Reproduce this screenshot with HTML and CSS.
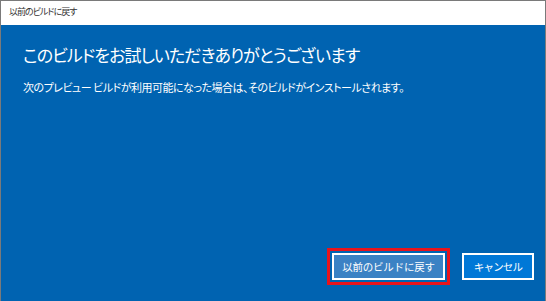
FILE: index.html
```html
<!DOCTYPE html>
<html lang="ja">
<head>
  <meta charset="UTF-8">
  <meta name="viewport" content="width=device-width, initial-scale=1.0">
  <title>以前のビルドに戻す</title>
  <link rel="stylesheet" href="styles.css">
</head>
<body>
  <div class="window">
    <div class="titlebar">以前のビルドに戻す</div>
    <div class="content">
      <h1 class="heading">このビルドをお試しいただきありがとうございます</h1>
      <p class="message">次のプレビュー ビルドが利用可能になった場合は、そのビルドがインストールされます。</p>
    </div>
    <div class="footer">
      <button type="button" class="btn btn-back">以前のビルドに戻す</button>
      <button type="button" class="btn btn-cancel">キャンセル</button>
    </div>
  </div>
</body>
</html>
```

FILE: styles.css
```css
html,
body {
  margin: 0;
  height: 100%;
}

body {
  font-family: "Noto Sans CJK JP", "Noto Sans", sans-serif;
  font-feature-settings: "palt";
}

.window {
  box-sizing: border-box;
  height: 100%;
  display: flex;
  flex-direction: column;
  border: 1px solid #7a7a7a;
  border-bottom: none;
  background-color: #0063b1;
}

.titlebar {
  height: 24px;
  line-height: 22px;
  padding-left: 8px;
  background-color: #ffffff;
  color: #333333;
  font-size: 9px;
  letter-spacing: -1px;
}

.content {
  flex: 1;
  padding: 16px 22px 0;
  color: #ffffff;
}

.heading {
  margin: 0;
  font-size: 17px;
  font-weight: normal;
  line-height: 28px;
  letter-spacing: -0.95px;
}

.message {
  margin: 9px 0 0;
  font-size: 11px;
  line-height: 18px;
  letter-spacing: -0.5px;
}

.footer {
  display: flex;
  justify-content: flex-end;
  gap: 17px;
  padding: 0 11px 21px 0;
}

.btn {
  box-sizing: border-box;
  height: 27px;
  border: 2px solid #ffffff;
  color: #ffffff;
  font-family: inherit;
  font-size: 10.5px;
  padding: 0;
  cursor: pointer;
}

.btn-back {
  width: 113px;
  background-color: #3b82c4;
  outline: 3px solid #e8141c;
  outline-offset: 2px;
  letter-spacing: -0.2px;
}

.btn-cancel {
  width: 72px;
  background-color: #0078d7;
  letter-spacing: -0.8px;
}
```
